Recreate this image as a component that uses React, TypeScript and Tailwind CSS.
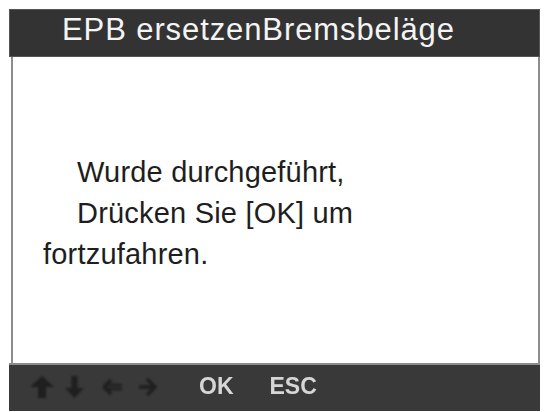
import React from "react";

function Arrow({ dir, className }: { dir: "up" | "down" | "left" | "right"; className?: string }) {
  const c = "#1f1f1f";
  if (dir === "up")
    return (
      <svg width="24" height="22" viewBox="0 0 24 22" className={className}>
        <path d="M12 0 L24 11 L16 11 L16 22 L8 22 L8 11 L0 11 Z" fill={c} />
      </svg>
    );
  if (dir === "down")
    return (
      <svg width="19" height="22" viewBox="0 0 19 22" className={className}>
        <path d="M6.5 0 L12.5 0 L12.5 12 L19 12 L9.5 22 L0 12 L6.5 12 Z" fill={c} />
      </svg>
    );
  if (dir === "left")
    return (
      <svg width="20" height="16" viewBox="0 0 20 16" className={className}>
        <path d="M8 1 L1 8 L8 15" stroke={c} strokeWidth="3.5" fill="none" />
        <path d="M3 6 L19 6 M3 10 L19 10" stroke={c} strokeWidth="2.5" fill="none" />
      </svg>
    );
  return (
    <svg width="19" height="20" viewBox="0 0 19 20" className={className}>
      <path d="M9 2 L17 10 L9 18" stroke={c} strokeWidth="3.5" fill="none" />
      <path d="M1 10 L16 10" stroke={c} strokeWidth="3.5" fill="none" />
    </svg>
  );
}

export default function App() {
  return (
    <div
      className="w-[545px] h-[412px] bg-white pt-[9px] pl-[9px] pr-[5px] overflow-hidden"
      style={{ fontFamily: '"Liberation Sans", Arial, sans-serif' }}
    >
      <div className="flex flex-col w-[531px]">
        <div className="h-[48px] bg-[#333333] border border-[#555555] pl-[52px]">
          <div className="text-[31px] leading-[40px] tracking-[0.9px] text-[#f4f4f4] whitespace-nowrap">
            EPB ersetzenBremsbeläge
          </div>
        </div>
        <div className="h-[306px] bg-white border-x-2 border-[#8c8c8c] ml-[2px] pt-[95px] pl-[30px]">
          <div className="text-[29px] leading-[41px] tracking-[0.2px] text-[#1e1e1e] whitespace-nowrap">
            <div className="pl-[34px]">Wurde durchgeführt,</div>
            <div className="pl-[34px]">Drücken Sie [OK] um</div>
            <div>fortzufahren.</div>
          </div>
        </div>
        <div className="h-[48px] bg-[#393939] border-t-2 border-[#8c8c8c] flex items-start pl-[21px]">
          <div className="flex items-center h-[44px] blur-[1px]">
            <Arrow dir="up" />
            <Arrow dir="down" className="ml-[11px]" />
            <Arrow dir="left" className="ml-[19px]" />
            <Arrow dir="right" className="ml-[15px]" />
          </div>
          <div className="ml-[42px] text-[23px] leading-[43px] font-bold text-[#d6d6d6] blur-[0.5px]">OK</div>
          <div className="ml-[36px] text-[23px] leading-[43px] font-bold text-[#d6d6d6] blur-[0.5px]">ESC</div>
        </div>
      </div>
    </div>
  );
}
